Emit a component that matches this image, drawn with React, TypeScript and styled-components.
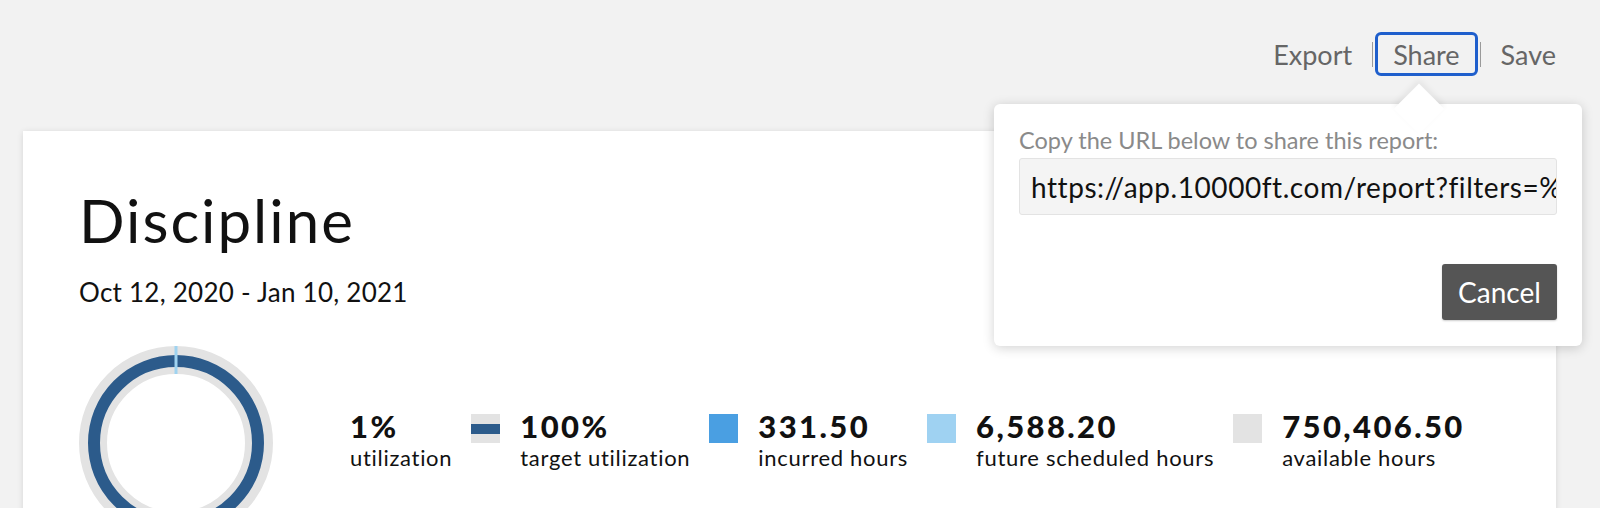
import React from 'react';
import styled, { createGlobalStyle } from 'styled-components';

const GlobalStyle = createGlobalStyle`
  html, body {
    margin: 0;
    padding: 0;
    background: #f2f2f2;
    overflow: hidden;
  }
  body {
    font-family: 'Lato', 'Open Sans', sans-serif;
    color: #111;
  }
`;

const Page = styled.div`
  position: relative;
  width: 1533px;
  margin-left: 23px;
`;

const Toolbar = styled.div`
  display: flex;
  justify-content: flex-end;
  align-items: center;
  height: 44px;
  padding-top: 32px;
  margin-right: -18px;
`;

const ToolButton = styled.button<{ $active?: boolean }>`
  font-family: inherit;
  font-size: 27px;
  color: #666;
  background: none;
  border: 3px solid ${({ $active }) => ($active ? '#1f5fcc' : 'transparent')};
  border-radius: 6px;
  height: 44px;
  padding: 0 15px;
  cursor: pointer;
`;

const Divider = styled.span`
  width: 1px;
  height: 25px;
  margin: 0 2px;
  background: #9a9a9a;
`;

const Card = styled.div`
  margin-top: 55px;
  background: #fff;
  box-shadow: 0 1px 6px rgba(0, 0, 0, 0.12);
  height: 520px;
  padding: 54px 0 0 56px;
  box-sizing: border-box;
`;

const Title = styled.h1`
  margin: 0;
  font-size: 60px;
  font-weight: 400;
  line-height: 70px;
  letter-spacing: 2px;
`;

const DateRange = styled.div`
  margin-top: 22px;
  font-size: 26px;
  line-height: 30px;
  letter-spacing: 0.25px;
`;

const Summary = styled.div`
  display: flex;
  align-items: flex-start;
  gap: 77px;
  margin-top: 39px;
`;

const Legend = styled.div`
  display: flex;
  align-items: flex-start;
  gap: 19px;
  margin-top: 62px;
`;

const LegendItem = styled.div`
  display: flex;
  align-items: flex-start;
  gap: 20px;
`;

const Swatch = styled.span<{ $color: string }>`
  position: relative;
  width: 29px;
  height: 29px;
  margin-top: 6px;
  background: ${({ $color }) => $color};
`;

const TargetBar = styled.span`
  position: absolute;
  left: 0;
  right: 0;
  top: 10px;
  height: 10px;
  background: #2c5b8b;
`;

const Value = styled.div`
  font-size: 31px;
  font-weight: 900;
  line-height: 36px;
  letter-spacing: 2.4px;
`;

const Label = styled.div`
  font-size: 22px;
  line-height: 28px;
  letter-spacing: 0.7px;
`;

const Popover = styled.div`
  position: absolute;
  top: 104px;
  right: -26px;
  width: 588px;
  height: 242px;
  box-sizing: border-box;
  padding: 23px 25px 26px;
  background: #fff;
  border-radius: 6px;
  box-shadow: 0 2px 12px rgba(0, 0, 0, 0.18);
  display: flex;
  flex-direction: column;

  &::before {
    content: '';
    position: absolute;
    top: -13px;
    right: 145px;
    width: 36px;
    height: 36px;
    background: #fff;
    transform: rotate(45deg);
    box-shadow: -3px -3px 6px rgba(0, 0, 0, 0.06);
  }
`;

const PopoverLabel = styled.div`
  position: relative;
  font-size: 23.5px;
  line-height: 26px;
  color: #8a8a8a;
`;

const UrlField = styled.input`
  margin-top: 5px;
  height: 57px;
  box-sizing: border-box;
  padding: 0 0 0 11px;
  background: #f4f4f4;
  border: 1px solid #e3e3e3;
  border-radius: 3px;
  font-family: inherit;
  font-size: 28px;
  letter-spacing: 0.55px;
  color: #111;
  outline: none;
`;

const Actions = styled.div`
  margin-top: auto;
  display: flex;
  justify-content: flex-end;
`;

const CancelButton = styled.button`
  width: 115px;
  height: 56px;
  background: #555;
  color: #fff;
  border: none;
  border-radius: 3px;
  font-family: inherit;
  font-size: 28px;
  box-shadow: 0 1px 2px rgba(0, 0, 0, 0.2);
  cursor: pointer;
`;

const Donut = () => (
  <svg width="194" height="194" viewBox="0 0 194 194">
    <circle cx="97" cy="97" r="83" fill="none" stroke="#e3e3e3" strokeWidth="28" />
    <circle cx="97" cy="97" r="82" fill="none" stroke="#2c5b8b" strokeWidth="12" />
    <line x1="97" y1="0" x2="97" y2="28" stroke="#9fd3f0" strokeWidth="3" />
  </svg>
);

const items = [
  { value: '100%', label: 'target utilization', color: '#e3e3e3', target: true },
  { value: '331.50', label: 'incurred hours', color: '#4a9fe2' },
  { value: '6,588.20', label: 'future scheduled hours', color: '#9fd2f2' },
  { value: '750,406.50', label: 'available hours', color: '#e3e3e3' },
];

export default function App() {
  return (
    <>
      <GlobalStyle />
      <Page>
        <Toolbar>
          <ToolButton>Export</ToolButton>
          <Divider />
          <ToolButton $active>Share</ToolButton>
          <Divider />
          <ToolButton>Save</ToolButton>
        </Toolbar>

        <Card>
          <Title>Discipline</Title>
          <DateRange>Oct 12, 2020 - Jan 10, 2021</DateRange>
          <Summary>
            <Donut />
            <Legend>
              <LegendItem>
                <div>
                  <Value>1%</Value>
                  <Label>utilization</Label>
                </div>
              </LegendItem>
              {items.map((it) => (
                <LegendItem key={it.label}>
                  <Swatch $color={it.color}>{it.target && <TargetBar />}</Swatch>
                  <div>
                    <Value>{it.value}</Value>
                    <Label>{it.label}</Label>
                  </div>
                </LegendItem>
              ))}
            </Legend>
          </Summary>
        </Card>

        <Popover>
          <PopoverLabel>Copy the URL below to share this report:</PopoverLabel>
          <UrlField readOnly value="https://app.10000ft.com/report?filters=%7B%22discipline%22%3A%5B%5D%7D" />
          <Actions>
            <CancelButton>Cancel</CancelButton>
          </Actions>
        </Popover>
      </Page>
    </>
  );
}
